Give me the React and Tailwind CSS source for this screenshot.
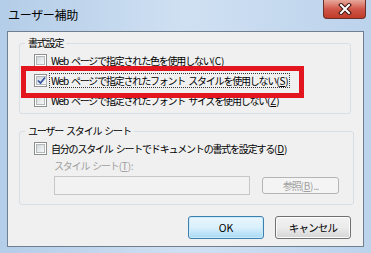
import React from "react";

const font = { fontFamily: '"Meiryo UI", "Noto Sans CJK JP", "Noto Sans", sans-serif' };

// Windows 7 風チェックボックス
const CheckBox = ({ checked }) => (
  <span className="w-[13px] h-[13px] border border-[#8e8f8f] bg-white p-[1px] flex shrink-0">
    <span className="flex-1 border border-[#b3b8bd] bg-gradient-to-br from-[#d4d8dc] to-[#f8f8f8] flex items-center justify-center">
      {checked && (
        <svg width="9" height="9" viewBox="0 0 9 9">
          <path d="M1 4.5 L3.5 7 L8 1.5" fill="none" stroke="#2a4ea0" strokeWidth="1.6" />
        </svg>
      )}
    </span>
  </span>
);

// アクセスキー (X)
const Key = ({ k }) => (
  <span className="tracking-[-0.2px]">
    (<u>{k}</u>)
  </span>
);

const Row = ({ checked, children, focus }) => (
  <div className="h-[20px] flex items-center gap-[3px]">
    <CheckBox checked={checked} />
    <span
      className={
        "leading-[13px] px-[1px] whitespace-nowrap " +
        (focus ? "outline outline-1 outline-dotted outline-[#333]" : "")
      }
    >
      {children}
    </span>
  </div>
);

export default function App() {
  return (
    <div
      style={font}
      className="relative w-[371px] h-[253px] bg-gradient-to-r from-[#b4cde8] via-[#cfe0f2] to-[#bcd3ec] flex flex-col text-[10px] text-black tracking-[-1.2px] [word-spacing:2px] overflow-hidden"
    >
      {/* タイトルバー */}
      <div className="h-[31px] flex items-start justify-between pl-[8px] pr-[5px]">
        <span className="mt-[6px] text-[12px] tracking-[-0.3px]">ユーザー補助</span>
        <div className="w-[43px] h-[19px] rounded-b-[4px] border border-t-0 border-[#6b2f2a] bg-gradient-to-b from-[#e6a89c] via-[#d0574a] to-[#c03a28] flex items-center justify-center">
          <svg width="14" height="12" viewBox="0 0 14 12">
            <path d="M3 2 L11 10 M11 2 L3 10" stroke="#3a1410" strokeWidth="4" strokeLinecap="square" />
            <path d="M3 2 L11 10 M11 2 L3 10" stroke="#ffffff" strokeWidth="2" strokeLinecap="square" />
          </svg>
        </div>
      </div>

      {/* クライアント領域 */}
      <div className="mx-[7px] h-[216px] border border-[#6f7f90] bg-[#f0f0f0] flex flex-col">
        <fieldset className="ml-[11px] mr-[12px] mt-[4px] border border-[#d5dfe5] rounded-[3px] px-[14px] pb-[3px]">
          <legend className="ml-[-9px] px-[3px] leading-[14px]">書式設定</legend>
          <Row>
            Web ページで指定された色を使用しない<Key k="C" />
          </Row>
          <Row checked focus>
            Web ページで指定されたフォント スタイルを使用しない<Key k="S" />
          </Row>
          <Row>
            Web ページで指定されたフォント サイズを使用しない<Key k="Z" />
          </Row>
        </fieldset>

        <fieldset className="ml-[11px] mr-[12px] mt-[10px] border border-[#d5dfe5] rounded-[3px] px-[14px] pb-[9px]">
          <legend className="ml-[-9px] px-[3px] leading-[14px]">ユーザー スタイル シート</legend>
          <Row>
            自分のスタイル シートでドキュメントの書式を設定する<Key k="D" />
          </Row>
          <div className="pl-[20px] text-[#a0a0a0] leading-[13px] mt-[1px]">
            スタイル シート<Key k="T" />:
          </div>
          <div className="pl-[20px] mt-[4px] flex items-center gap-[12px]">
            <div className="w-[196px] h-[19px] border border-[#c7c7c7] bg-[#f2f2f2]" />
            <div className="w-[77px] h-[17px] border border-[#b5b5b5] rounded-[3px] bg-[#f4f4f4] text-[#a0a0a0] flex items-center justify-center">
              参照<Key k="B" />...
            </div>
          </div>
        </fieldset>

        <div className="mt-auto mb-[7px] mr-[12px] flex justify-end gap-[11px] text-[10.5px] tracking-normal">
          <button className="w-[76px] h-[23px] border border-[#3c7fb1] rounded-[3px] bg-gradient-to-b from-[#eaf6fd] via-[#d9f0fc] to-[#a7d9f5] shadow-[inset_0_0_0_1px_#cbe9f9] flex items-center justify-center">
            OK
          </button>
          <button className="w-[76px] h-[23px] border border-[#707070] rounded-[3px] bg-gradient-to-b from-[#f2f2f2] via-[#ebebeb] to-[#d5d5d5] shadow-[inset_0_0_0_1px_#fcfcfc] flex items-center justify-center tracking-[-0.8px]">
            キャンセル
          </button>
        </div>
      </div>

      {/* 赤い強調枠 */}
      <div className="absolute left-[21px] top-[66px] w-[283px] h-[32px] border-[5px] border-[#e3161f]" />
    </div>
  );
}
